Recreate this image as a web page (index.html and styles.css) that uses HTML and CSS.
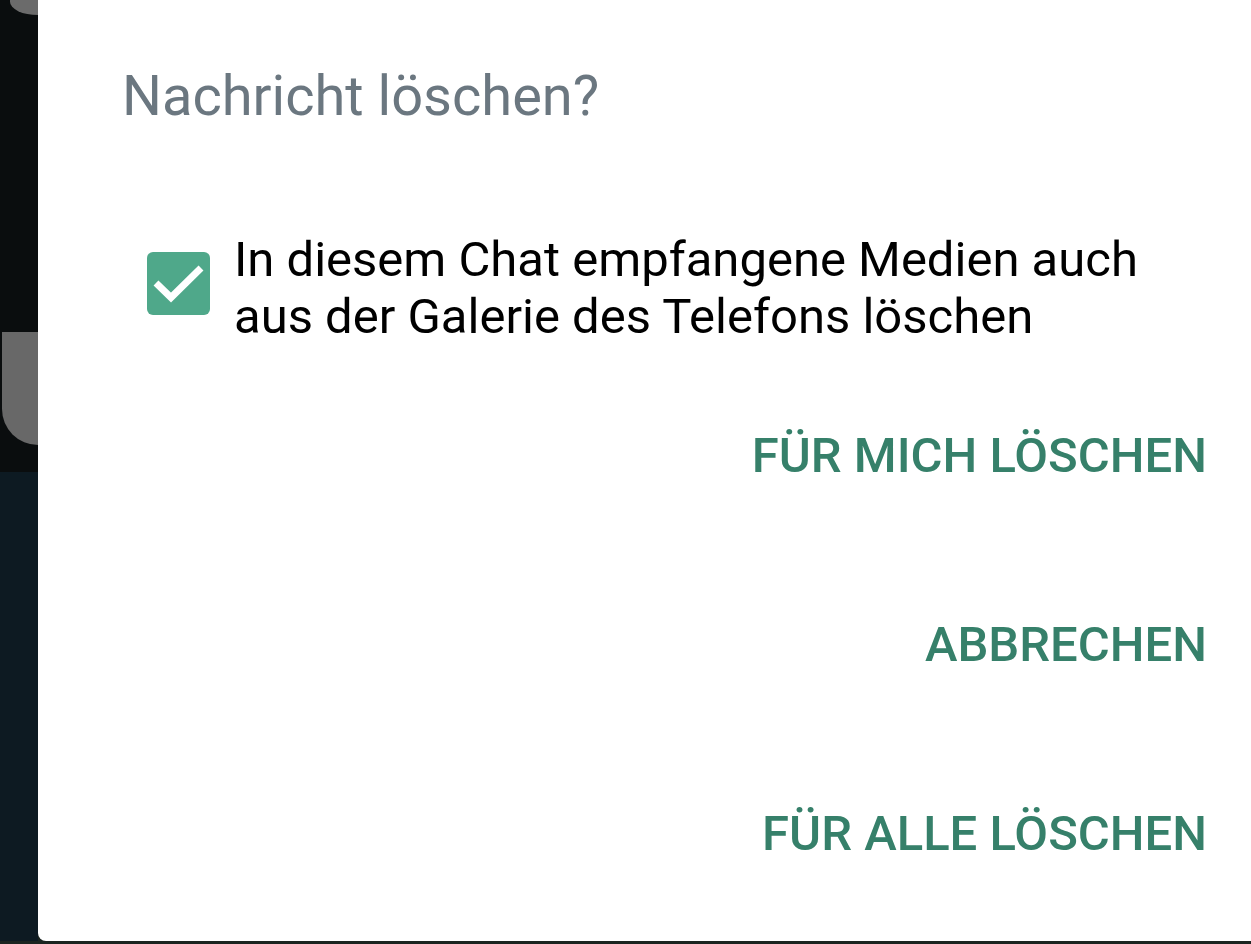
FILE: index.html
```html
<!DOCTYPE html>
<html lang="de">
<head>
<meta charset="utf-8">
<title>Nachricht löschen?</title>
<link rel="stylesheet" href="styles.css">
</head>
<body>
<div class="screen">
  <div class="strip">
    <div class="strip-top">
      <div class="blob-circle"></div>
      <div class="blob-card"></div>
    </div>
    <div class="strip-bottom"></div>
  </div>
  <div class="dialog">
    <h1 class="title">Nachricht löschen?</h1>
    <label class="option">
      <span class="checkbox">
        <svg viewBox="0 0 63 63" width="63" height="63" aria-hidden="true">
          <path d="M9 31 L24 45.5 L54 16" fill="none" stroke="#ffffff" stroke-width="7" stroke-linecap="butt" stroke-linejoin="miter"/>
        </svg>
      </span>
      <span class="option-text">In diesem Chat empfangene Medien auch aus der Galerie des Telefons löschen</span>
    </label>
    <div class="actions">
      <div class="action">FÜR MICH LÖSCHEN</div>
      <div class="action">ABBRECHEN</div>
      <div class="action">FÜR ALLE LÖSCHEN</div>
    </div>
  </div>
</div>
</body>
</html>
```
FILE: styles.css
```css
* { box-sizing: border-box; }
html, body {
  margin: 0;
  padding: 0;
  width: 1251px;
  height: 944px;
  overflow: hidden;
  background: #1b2420;
  font-family: Roboto, "Noto Sans", sans-serif;
}
.screen {
  display: flex;
  width: 1251px;
  height: 941px;
}
.strip {
  width: 38px;
  flex: none;
  display: flex;
  flex-direction: column;
}
.strip-top {
  height: 472px;
  background: #0a0d0e;
  display: flex;
  flex-direction: column;
}
.blob-circle {
  height: 15px;
  margin-left: 10px;
  background: #6b6b6b;
  border-bottom-left-radius: 34px 16px;
}
.blob-card {
  height: 113px;
  margin-top: 317px;
  margin-left: 2px;
  background: #686868;
  border-bottom-left-radius: 40px;
}
.strip-bottom {
  flex: 1;
  background: #0d1a22;
}
.dialog {
  flex: 1;
  background: #ffffff;
  border-bottom-left-radius: 8px;
  padding: 64px 44px 0 84px;
}
.title {
  margin: 0;
  font-size: 56px;
  font-weight: 400;
  line-height: 64px;
  color: #6b7780;
}
.option {
  display: flex;
  align-items: flex-start;
  margin-top: 103px;
  margin-left: 25px;
}
.checkbox {
  flex: none;
  width: 63px;
  height: 63px;
  margin-top: 21px;
  border-radius: 6px;
  background: #4fa88a;
  display: flex;
}
.option-text {
  margin-left: 24px;
  font-size: 49px;
  line-height: 57px;
  color: #000000;
  max-width: 950px;
}
.actions {
  display: flex;
  flex-direction: column;
  margin-top: 79px;
}
.action {
  height: 189px;
  line-height: 64px;
  text-align: right;
  font-size: 49px;
  font-weight: 500;
  color: #36806a;
}
```
